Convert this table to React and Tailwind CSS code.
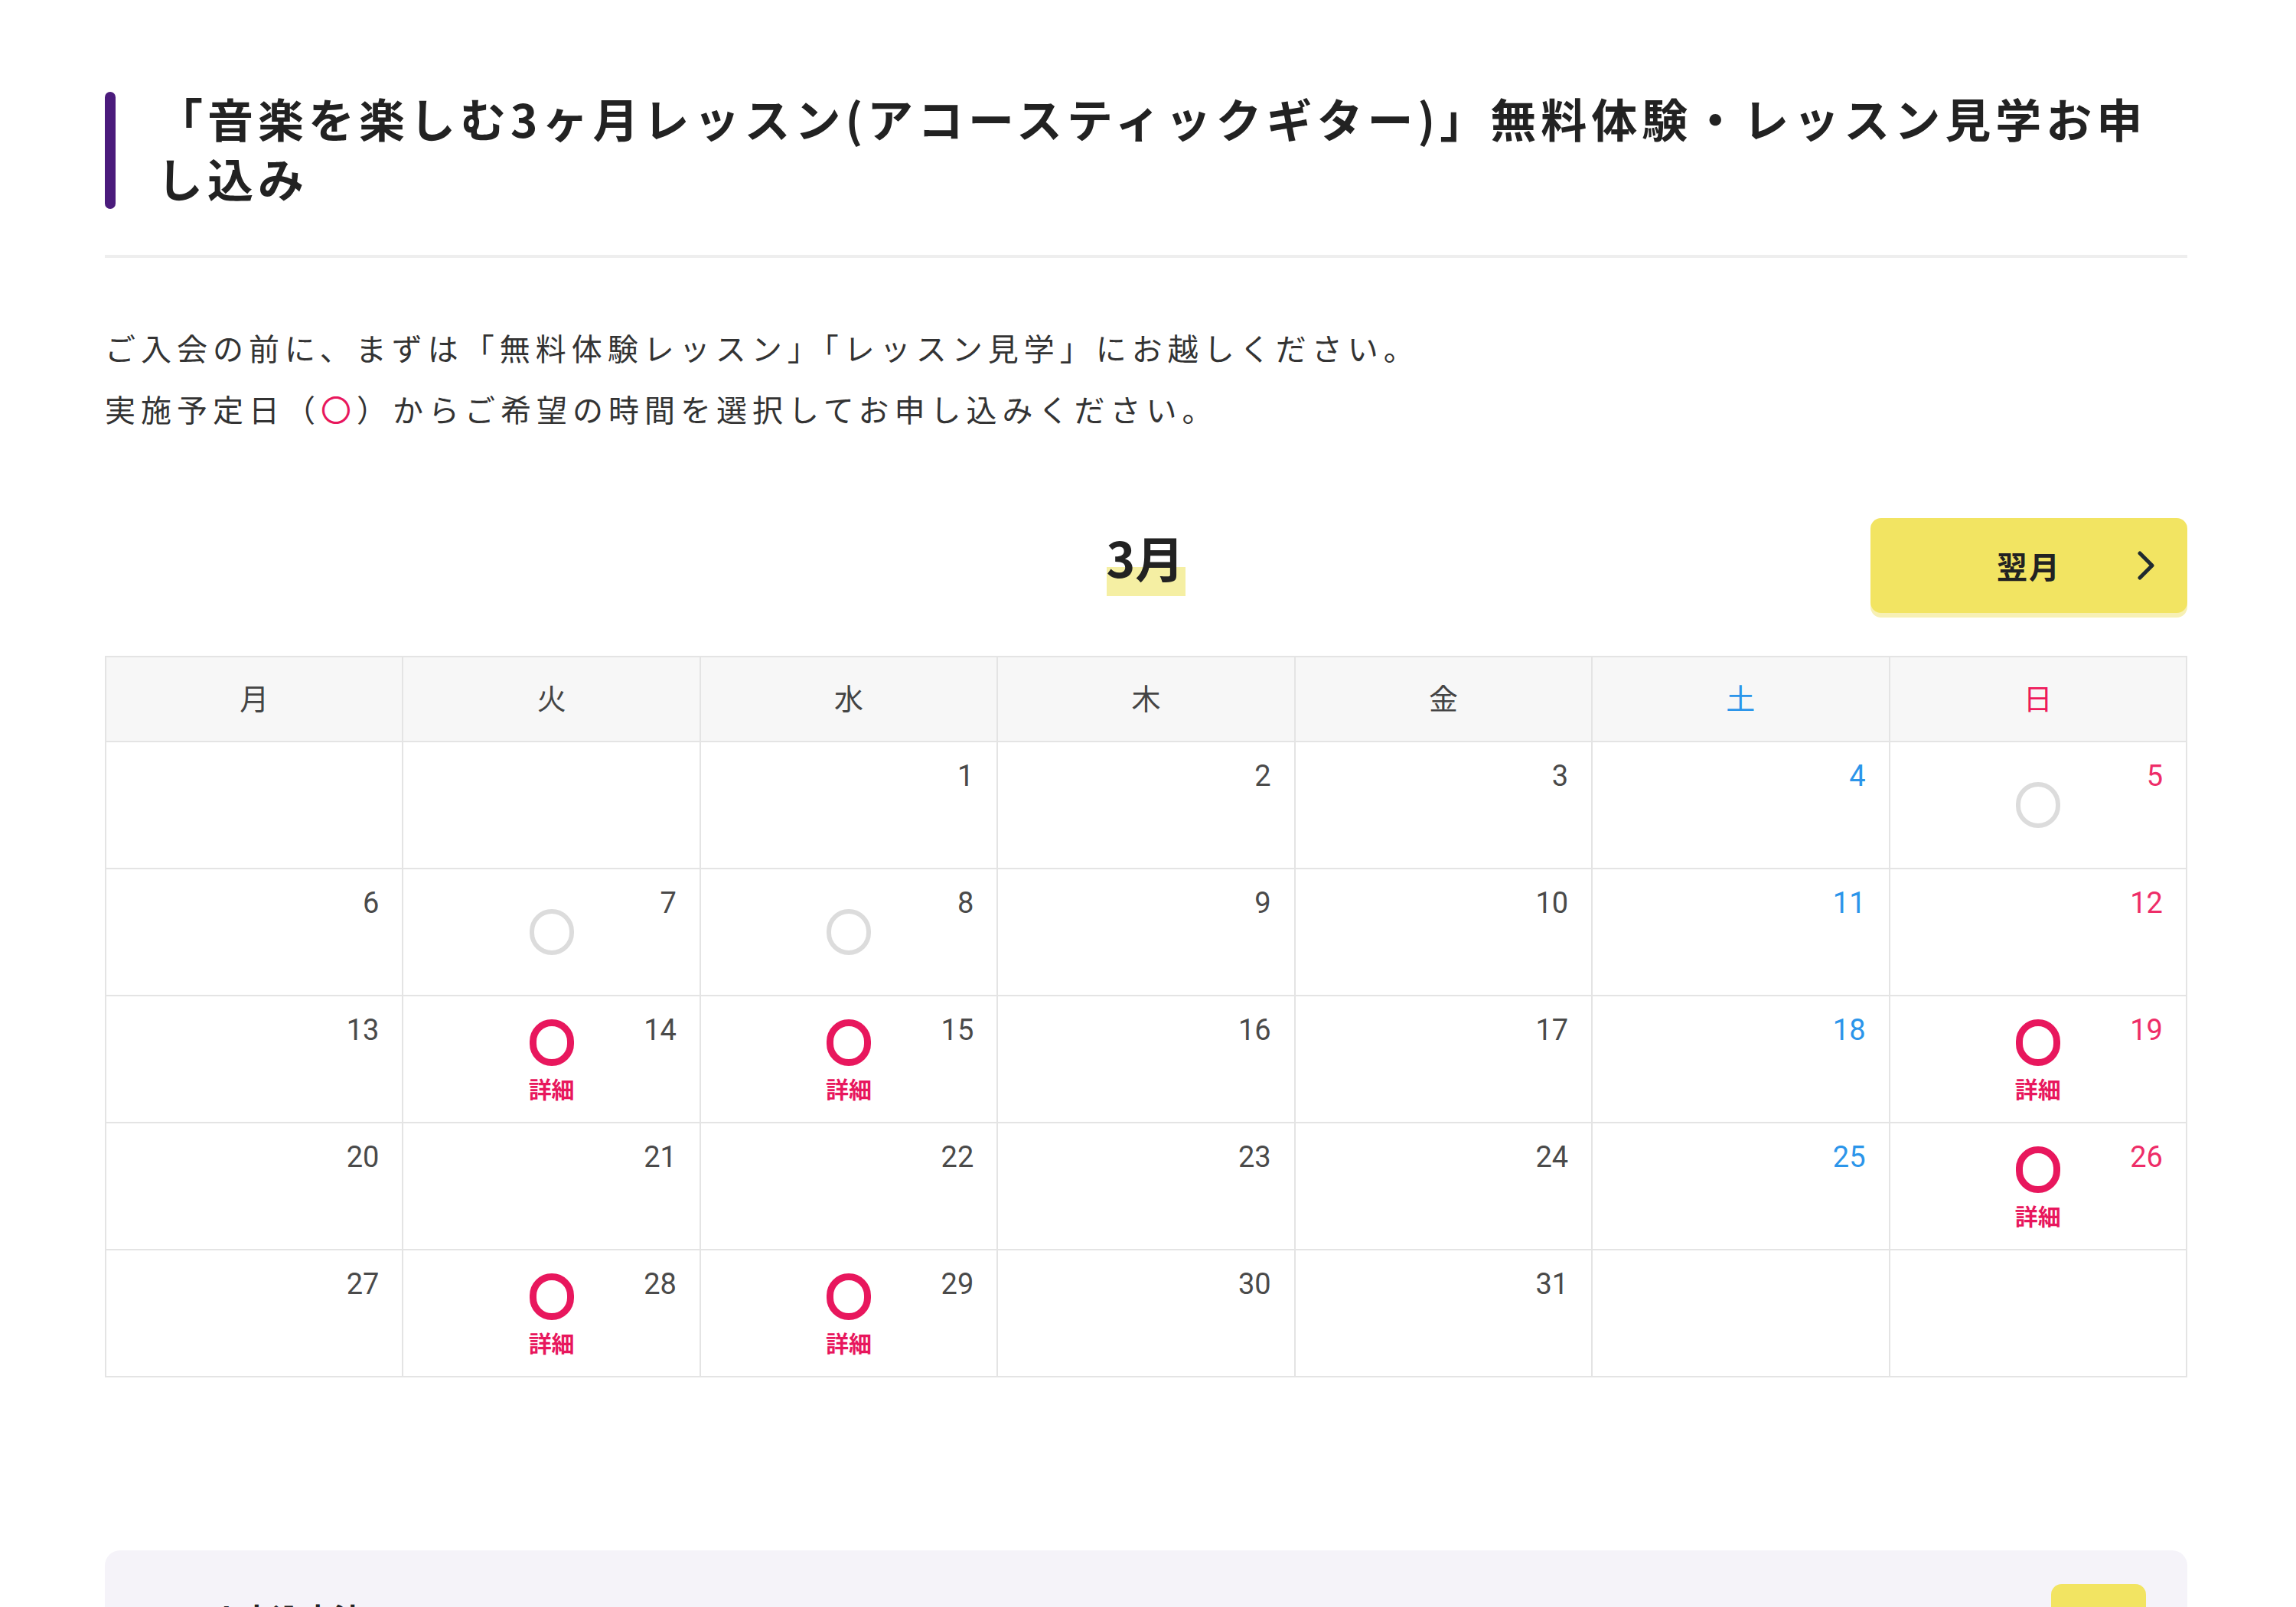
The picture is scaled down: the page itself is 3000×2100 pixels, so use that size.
const jp = "font-['Noto_Sans_CJK_JP','Noto_Sans',sans-serif]"

const weekdays = [
  { label: "月", color: "text-[#444]" },
  { label: "火", color: "text-[#444]" },
  { label: "水", color: "text-[#444]" },
  { label: "木", color: "text-[#444]" },
  { label: "金", color: "text-[#444]" },
  { label: "土", color: "text-[#2b95ea]" },
  { label: "日", color: "text-[#ee1a5c]" },
]

// mark: "closed" = grey ring, "open" = pink ring + 詳細
const weeks = [
  [null, null, { d: 1 }, { d: 2 }, { d: 3 }, { d: 4 }, { d: 5, mark: "closed" }],
  [{ d: 6 }, { d: 7, mark: "closed" }, { d: 8, mark: "closed" }, { d: 9 }, { d: 10 }, { d: 11 }, { d: 12 }],
  [{ d: 13 }, { d: 14, mark: "open" }, { d: 15, mark: "open" }, { d: 16 }, { d: 17 }, { d: 18 }, { d: 19, mark: "open" }],
  [{ d: 20 }, { d: 21 }, { d: 22 }, { d: 23 }, { d: 24 }, { d: 25 }, { d: 26, mark: "open" }],
  [{ d: 27 }, { d: 28, mark: "open" }, { d: 29, mark: "open" }, { d: 30 }, { d: 31 }, null, null],
]

function DayCell({ day, col }) {
  const numColor =
    col === 5 ? "text-[#2b95ea]" : col === 6 ? "text-[#ee2d68]" : "text-[#4a4a4a]"

  return (
    <div className="grid h-[166px] border-b-2 border-r-2 border-[#e4e4e4] bg-white">
      {day && (
        <span
          className={`col-start-1 row-start-1 self-start justify-self-end pr-[30px] pt-[25px] font-['Roboto','Noto_Sans',sans-serif] text-[38px] leading-[38px] ${numColor}`}
        >
          {day.d}
        </span>
      )}
      {day?.mark === "closed" && (
        <div className="col-start-1 row-start-1 h-[60px] w-[58px] self-center justify-self-center rounded-full border-[6px] border-[#dcdcdc]" />
      )}
      {day?.mark === "open" && (
        <div className="col-start-1 row-start-1 flex flex-col items-center self-center justify-self-center">
          <div className="h-[61px] w-[58px] rounded-full border-[9px] border-[#e8175d]" />
          <span className={`mt-[14px] ${jp} text-[30px] font-bold leading-[30px] text-[#e8175d]`}>
            詳細
          </span>
        </div>
      )}
    </div>
  )
}

export default function App() {
  return (
    <div className={`min-h-screen bg-white ${jp}`}>
      <div className="ml-[137px] w-[2721px] pt-[115px]">
        {/* Title */}
        <div className="flex">
          <div className="mt-[5px] h-[153px] w-[14px] shrink-0 rounded-full bg-[#4b1b7c]" />
          <h1 className="ml-[54px] text-[60px] font-bold leading-[78px] tracking-[6px] text-[#222]">
            「音楽を楽しむ3ヶ月レッスン(アコースティックギター)」無料体験・レッスン見学お申し込み
          </h1>
        </div>

        <div className="mt-[60px] h-[4px] bg-[#eeeeee]" />

        {/* Intro */}
        <div className="mt-[77px] text-[40px] leading-[80px] tracking-[7px] text-[#333]">
          <p>ご入会の前に、まずは「無料体験レッスン」「レッスン見学」にお越しください。</p>
          <p>
            実施予定日（<span className="text-[#e8175d]">〇</span>）からご希望の時間を選択してお申し込みください。
          </p>
        </div>

        {/* Month header */}
        <div className="mt-[103px] grid grid-cols-[1fr_auto_1fr] items-center">
          <div />
          <span className="inline-block h-[80px] bg-[linear-gradient(transparent_52%,#f5efa3_52%)] pb-[24px] pr-[2px] text-[64px] font-bold leading-[56px] text-[#222]">
            3月
          </span>
          <button
            type="button"
            className="grid h-[124px] w-[414px] grid-cols-[1fr_auto_1fr] items-center justify-self-end rounded-[14px] bg-[#f2e462] px-[42px] shadow-[0_6px_0_#f7f0b5]"
          >
            <span />
            <span className="text-[40px] font-bold tracking-[2px] text-[#222]">翌月</span>
            <svg
              className="justify-self-end"
              width="24"
              height="40"
              viewBox="0 0 24 40"
              fill="none"
              stroke="#1f2a30"
              strokeWidth="5"
              strokeLinecap="round"
              strokeLinejoin="round"
            >
              <polyline points="4,4 20,20 4,36" />
            </svg>
          </button>
        </div>

        {/* Calendar */}
        <div className="mt-[56px] grid grid-cols-7 border-l-2 border-t-2 border-[#e4e4e4]">
          {weekdays.map((w) => (
            <div
              key={w.label}
              className={`flex h-[111px] items-center justify-center border-b-2 border-r-2 border-[#e4e4e4] bg-[#f7f7f7] pb-[6px] text-[38px] ${w.color}`}
            >
              {w.label}
            </div>
          ))}
          {weeks.map((week, wi) =>
            week.map((day, ci) => <DayCell key={`${wi}-${ci}`} day={day} col={ci} />)
          )}
        </div>

        {/* How to apply */}
        <div className="mt-[226px] flex items-start justify-between rounded-[20px] bg-[#f5f3f9] pb-[60px] pl-[93px] pr-[54px] pt-[44px]">
          <h3 className="mt-[14px] text-[40px] font-bold leading-[60px] text-[#222]">Web申込方法</h3>
          <div className="h-[124px] w-[124px] rounded-[14px] bg-[#f2e462]" />
        </div>
      </div>
    </div>
  )
}
